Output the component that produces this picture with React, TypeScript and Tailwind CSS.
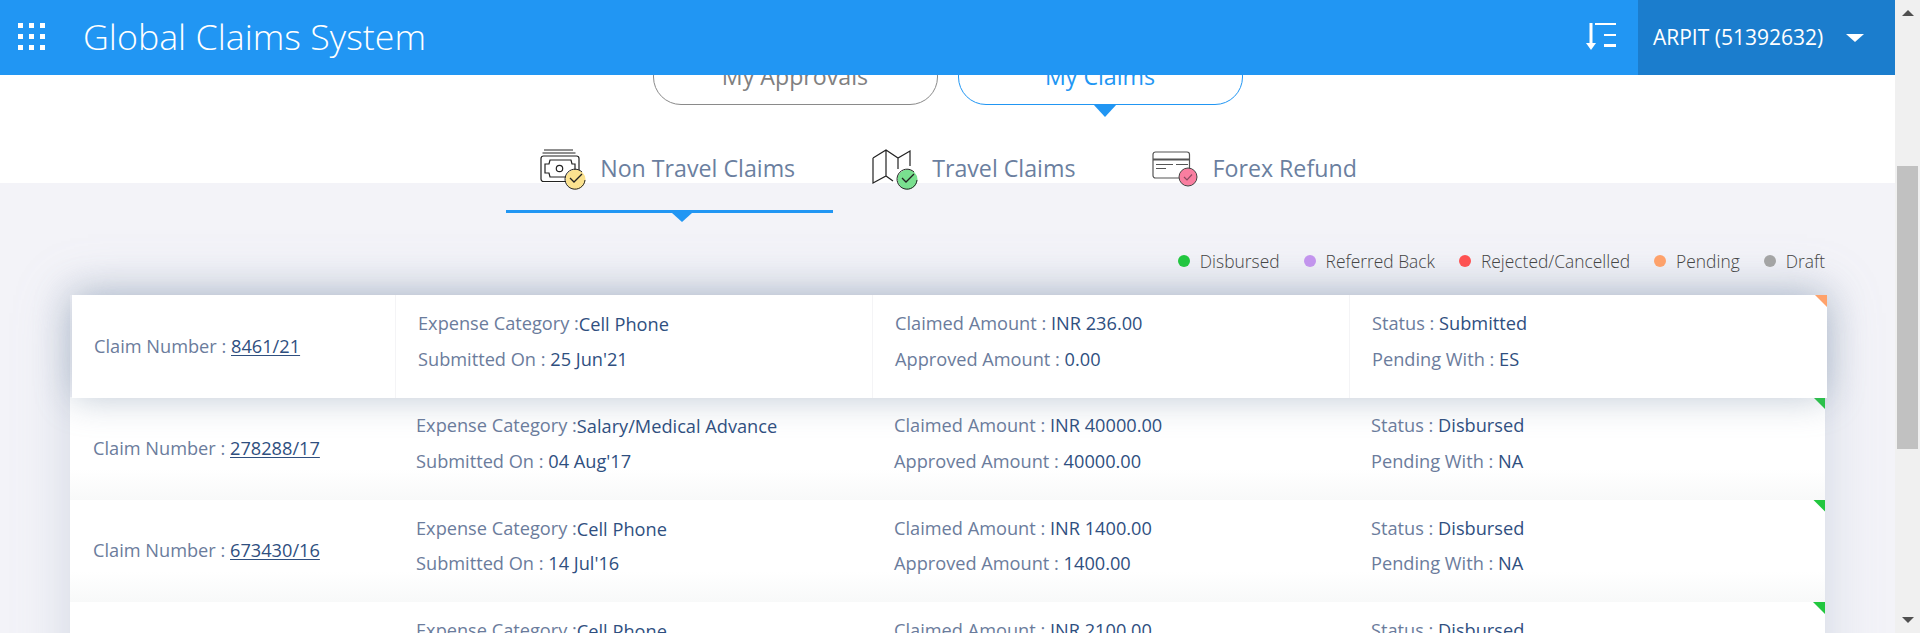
const claims = [
  { no: "8461/21", category: "Cell Phone", date: "25 Jun'21", amount: "INR 236.00", approved: "0.00", status: "Submitted", pending: "ES", active: true },
  { no: "278288/17", category: "Salary/Medical Advance", date: "04 Aug'17", amount: "INR 40000.00", approved: "40000.00", status: "Disbursed", pending: "NA" },
  { no: "673430/16", category: "Cell Phone", date: "14 Jul'16", amount: "INR 1400.00", approved: "1400.00", status: "Disbursed", pending: "NA" },
  { no: "512204/16", category: "Cell Phone", date: "09 Mar'16", amount: "INR 2100.00", approved: "2100.00", status: "Disbursed", pending: "NA" },
];

const legend = [
  { label: "Disbursed", dot: "bg-[#22c73f]" },
  { label: "Referred Back", dot: "bg-[#c495ee]" },
  { label: "Rejected/Cancelled", dot: "bg-[#ff5252]" },
  { label: "Pending", dot: "bg-[#ffa26b]" },
  { label: "Draft", dot: "bg-[#a5a5a5]" },
];

function Badge({ cx, cy, r, fill, stroke = "#222" }: { cx: number; cy: number; r: number; fill: string; stroke?: string }) {
  return (
    <g>
      <circle cx={cx + 0.5} cy={cy + 0.5} r={r} fill={fill} stroke="none" />
      <path
        d={`M${cx + r * 0.7} ${cy - r * 0.7} A${r} ${r} 0 1 0 ${cx + r} ${cy + 1}`}
        fill="none"
        stroke={stroke}
        strokeWidth="1"
      />
      <path d={`M${cx - 5} ${cy - 1} l4 4 l8 -8`} fill="none" stroke={stroke} strokeWidth="1.3" />
    </g>
  );
}

function MoneyIcon() {
  return (
    <svg width="46" height="42" viewBox="0 0 46 42" fill="none" stroke="#222" strokeWidth="1.2" className="shrink-0 -my-px translate-y-px">
      <path d="M4 2h29M2.500 5h33" />
      <rect x="1" y="8" width="38" height="25.500" rx="2.500" />
      <path d="M10 12h21l1 4h3v9h-3l-1 4H10l-1-4H5v-9h4z" />
      <circle cx="19.500" cy="20.500" r="3.200" />
      <Badge cx={35} cy={31} r={10} fill="#fbe28f" />
    </svg>
  );
}

function MapIcon() {
  return (
    <svg width="46" height="42" viewBox="0 0 46 42" fill="none" stroke="#222" strokeWidth="1.2" className="shrink-0 -my-px translate-y-px">
      <path d="M1 10l13-8 12 8 12-7v15M14 2v26M26 10v11M21 33l-7-5-13 7V10" />
      <Badge cx={35} cy={31} r={10} fill="#79e08f" />
    </svg>
  );
}

function CardIcon() {
  return (
    <svg width="46" height="42" viewBox="0 0 46 42" fill="none" stroke="#555" strokeWidth="1.2" className="shrink-0 -my-px translate-y-px">
      <rect x="1" y="4" width="36.500" height="26" rx="2.500" />
      <path d="M1 11.500h36.500" strokeWidth="1.800" />
      <path d="M4 16.500h17M24 16.500h12M4 20.500h10" />
      <circle cx="36" cy="29" r="9" fill="#f97ea0" stroke="#444" strokeWidth="1" />
      <path d="M32 29l3 3 5-5.500" stroke="#8c4a60" strokeWidth="1.200" />
    </svg>
  );
}

function Triangle({ color }: { color: string }) {
  return (
    <span
      className={`absolute top-0 right-0 w-3 h-3 [clip-path:polygon(0_0,100%_0,100%_100%)] ${color}`}
    />
  );
}

function Field({ label, value, tight }: { label: string; value: string; tight?: boolean }) {
  return (
    <div className="leading-[35.500px] whitespace-nowrap">
      <span className="text-[#6b7c9c]">{label}{tight ? "" : " "}</span>
      <span className={tight ? "relative top-px text-[#2f4f7f]" : "text-[#2f4f7f]"}>{value}</span>
    </div>
  );
}

function ClaimRow({ claim }: { claim: (typeof claims)[number] }) {
  const cell = claim.active ? "pt-[11px] pl-[22px]" : "pt-[11px] pl-[23px]";
  const divider = claim.active ? "border-r border-[#f4f4f6]" : "";
  return (
    <div
      className={
        claim.active
          ? "relative z-10 h-[103px] ml-[2px] -mr-[2px] -mb-px bg-white grid grid-cols-[324px_477px_477px_477px] shadow-[0_0_36px_rgba(120,140,165,0.48)]"
          : "relative h-[102.500px] bg-gradient-to-b from-white from-70% to-[#f8f9f9] grid grid-cols-[324px_477px_477px_477px]"
      }
    >
      <div className={`flex items-center ${claim.active ? "pl-[22px]" : "pl-[23px]"} ${divider}`}>
        <span className="text-[#6b7c9c] whitespace-pre">Claim Number : </span>
        <a className="text-[#2f4f7f] underline underline-offset-2">{claim.no}</a>
      </div>
      <div className={`pt-[11px] pl-[22px] ${divider}`}>
        <Field label="Expense Category :" value={claim.category} tight />
        <Field label="Submitted On :" value={claim.date} />
      </div>
      <div className={`${cell} ${divider}`}>
        <Field label="Claimed Amount :" value={claim.amount} />
        <Field label="Approved Amount :" value={claim.approved} />
      </div>
      <div className={cell}>
        <Field label="Status :" value={claim.status} />
        <Field label="Pending With :" value={claim.pending} />
      </div>
      <Triangle color={claim.active ? "bg-[#ffa26b]" : "bg-[#22c73f]"} />
    </div>
  );
}

function Tab({ icon, label, active }: { icon: React.ReactNode; label: string; active?: boolean }) {
  return (
    <div className={`relative flex items-center gap-[14px] pl-[34px] pr-[38px] pb-[22px] border-b-[3px] ${active ? "border-[#2196f3]" : "border-transparent"}`}>
      {icon}
      <span className="text-[23.200px] text-[#6b7f9f]">{label}</span>
      {active && (
        <span className="absolute left-1/2 ml-[2px] top-full mt-[3px] w-0 h-0 border-x-[10px] border-x-transparent border-t-[9px] border-t-[#2196f3]" />
      )}
    </div>
  );
}

export default function App() {
  return (
    <div className="h-screen flex overflow-hidden font-['Open_Sans',sans-serif] text-[18.200px]">
      <div className="flex-1 min-w-0 flex flex-col">
        <header className="relative z-20 h-[75px] shrink-0 bg-[#2196f3] flex items-center text-white">
          <div className="grid grid-cols-3 gap-[6px] ml-[18px] -mt-[2px]">
            {Array.from({ length: 9 }).map((_, i) => (
              <span key={i} className="w-[5px] h-[5px] bg-white" />
            ))}
          </div>
          <h1 className="ml-[38px] -mt-[2px] text-[35.750px] font-light">Global Claims System</h1>
          <svg width="31" height="28" viewBox="0 0 31 28" className="ml-auto mr-[21px] self-start mt-[23px]" fill="#fff">
            <rect x="3.500" y="0" width="3" height="21" />
            <path d="M0 20h10l-5 7z" />
            <rect x="9" y="0" width="21" height="2" />
            <rect x="18" y="11" width="12" height="2" />
            <rect x="18" y="21" width="12" height="3" />
          </svg>
          <div className="w-[257px] h-full bg-[#1b7dcd] flex items-center pl-[15px] pt-px text-[21px]">
            ARPIT (51392632)
            <span className="ml-[23px] w-0 h-0 border-x-[9px] border-x-transparent border-t-[8px] border-t-white" />
          </div>
        </header>

        <main className="flex-1 min-h-0 overflow-hidden bg-[linear-gradient(to_bottom,#fff_0,#fff_108px,#f3f3f8_108px)]">
          <div className="flex justify-center gap-5 -mt-[27px] text-[23.200px]">
            <div className="w-[285px] h-[57px] rounded-[28px] border border-[#8a8a8a] text-[#808080] flex items-center justify-center">
              My Approvals
            </div>
            <div className="relative w-[285px] h-[57px] rounded-[28px] border border-[#2196f3] text-[#2196f3] flex items-center justify-center">
              My Claims
              <span className="absolute left-1/2 -ml-[7px] top-full w-0 h-0 border-x-[12px] border-x-transparent border-t-[13px] border-t-[#2196f3]" />
            </div>
          </div>

          <div className="flex justify-center gap-[5px] mt-[43px] ml-[6px]">
            <Tab icon={<MoneyIcon />} label="Non Travel Claims" active />
            <Tab icon={<MapIcon />} label="Travel Claims" />
            <Tab icon={<CardIcon />} label="Forex Refund" />
          </div>

          <div className="flex justify-end gap-[24px] mt-[36px] mb-[22px] pr-[70px] h-6 items-center text-[17.400px] text-[#444] font-light">
            {legend.map((l) => (
              <div key={l.label} className="flex items-center gap-[10px]">
                <span className={`w-3 h-3 rounded-full ${l.dot}`} />
                {l.label}
              </div>
            ))}
          </div>

          <div className="mx-[70px] shadow-[0_0_50px_rgba(150,165,190,0.35)]">
            {claims.map((c) => (
              <ClaimRow key={c.no} claim={c} />
            ))}
          </div>
        </main>
      </div>

      <div className="w-[25px] shrink-0 bg-[#f0f0f0] flex flex-col items-center">
        <span className="mt-[10px] w-0 h-0 border-x-[6px] border-x-transparent border-b-[6px] border-b-[#505050]" />
        <div className="mt-[150px] w-[21px] h-[283px] bg-[#c1c1c1]" />
        <span className="mt-auto mb-[10px] w-0 h-0 border-x-[6px] border-x-transparent border-t-[6px] border-t-[#505050]" />
      </div>
    </div>
  );
}
